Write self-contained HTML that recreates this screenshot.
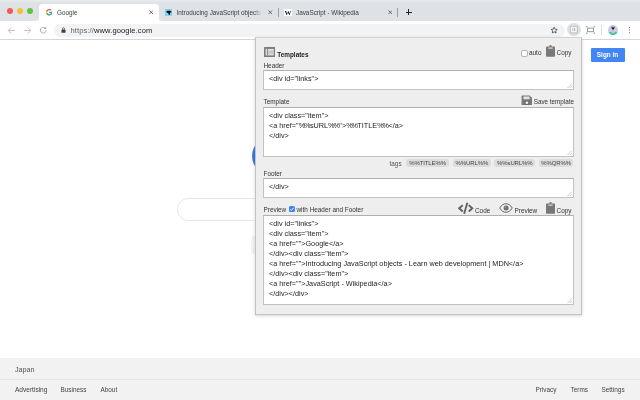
<!DOCTYPE html>
<html>
<head>
<meta charset="utf-8">
<title>Google</title>
<style>
*{box-sizing:border-box;margin:0;padding:0}
html,body{width:640px;height:400px;overflow:hidden;background:#fff;font-family:"Liberation Sans",sans-serif;color:#222}
.abs{position:absolute}
#tabbar{left:0;top:0;width:640px;height:21px;background:#dee1e6}
.tl{position:absolute;border-radius:50%;width:6px;height:6px;top:7.5px}
.tabtxt{position:absolute;font-size:6.35px;color:#3c4043;top:8.6px;white-space:nowrap}
.tabx{position:absolute;top:10.2px;width:4.5px;height:4.5px}
#toolbar{left:0;top:21px;width:640px;height:19px;background:#fff;border-bottom:1px solid #d6d6d6}
#omni{left:54px;top:23.5px;width:511px;height:13.5px;border-radius:6.75px;background:#f1f3f4}
#url{left:70.5px;top:26px;font-size:7.55px;color:#202124;white-space:nowrap;letter-spacing:0.1px}
#url span{color:#5f6368}
#popup{left:255px;top:37px;width:327px;height:277.5px;background:#eeeeee;border:1px solid #c2c2c2;border-top-color:#d4d4d4;box-shadow:0 1px 3px rgba(0,0,0,.16)}
.lbl{position:absolute;font-size:6.4px;color:#333;white-space:nowrap}
.ta{position:absolute;left:263px;width:311px;background:#fff;border:1px solid #c2c2c2;border-top-color:#b0b0b0;font-size:7.28px;color:#1c1c1c;padding:3px 5px;line-height:10px;white-space:nowrap;overflow:hidden}
.tag{position:absolute;top:159.3px;height:7.9px;background:#dcdcdc;border-radius:3px;font-size:6px;letter-spacing:-0.1px;color:#444;line-height:8.3px;text-align:center}
.pc{letter-spacing:-1.1px;margin-right:0.5px}
.grip{position:absolute;width:5px;height:5px;right:1px;bottom:1px}
#footer{left:0;top:358px;width:640px;height:42px;background:#f2f2f2}
#footer .ln{position:absolute;left:0;top:20.5px;width:640px;height:1px;background:#e6e6e6}
.ft{position:absolute;font-size:6.4px;color:#444;white-space:nowrap}
</style>
</head>
<body>
<div id="root" style="position:absolute;left:0;top:0;width:640px;height:400px;will-change:transform">
<!-- browser chrome -->
<div id="tabbar" class="abs"></div>
<div class="abs" style="left:0;top:0;width:640px;height:3px;background:linear-gradient(180deg,#e9ebee 0%,#e4e6ea 50%,#dee1e6 100%)"></div>
<svg class="abs" style="left:0;top:0" width="200" height="22" viewBox="0 0 200 22"><path fill="#fff" d="M36 21Q39 21 39 18V7.5Q39 4 42.5 4H155.5Q159 4 159 7.5V18Q159 21 162 21V22H36Z"/></svg>
<div class="tl" style="left:6.5px;background:#ee5c54"></div>
<div class="tl" style="left:16.5px;background:#f6bd3b"></div>
<div class="tl" style="left:26.5px;background:#5fc43c"></div>

<svg class="abs" style="left:45.8px;top:9px" width="6.5" height="6.5" viewBox="0 0 48 48">
<path fill="#EA4335" d="M24 9.5c3.54 0 6.71 1.22 9.21 3.6l6.85-6.85C35.9 2.38 30.47 0 24 0 14.62 0 6.51 5.38 2.56 13.22l7.98 6.19C12.43 13.72 17.74 9.5 24 9.5z"/>
<path fill="#4285F4" d="M46.98 24.55c0-1.57-.15-3.09-.38-4.55H24v9.02h12.94c-.58 2.96-2.26 5.48-4.78 7.18l7.73 6c4.51-4.18 7.09-10.36 7.09-17.65z"/>
<path fill="#FBBC05" d="M10.53 28.59c-.48-1.45-.76-2.99-.76-4.59s.27-3.14.76-4.59l-7.98-6.19C.92 16.46 0 20.12 0 24c0 3.88.92 7.54 2.56 10.78l7.97-6.19z"/>
<path fill="#34A853" d="M24 48c6.48 0 11.93-2.130 15.89-5.81l-7.730-6c-2.150 1.450-4.920 2.3-8.160 2.3-6.260 0-11.570-4.220-13.470-9.910l-7.980 6.190C6.510 42.620 14.620 48 24 48z"/>
</svg>
<div class="tabtxt" style="left:57px">Google</div>
<svg class="tabx" style="left:148.8px" viewBox="0 0 10 10"><path d="M1 1l8 8M9 1l-8 8" stroke="#45494d" stroke-width="1.7" fill="none"/></svg>

<div class="abs" style="left:164.6px;top:8.8px;width:7.8px;height:7.2px;background:#83d0f2"></div>
<svg class="abs" style="left:164.6px;top:8.8px" width="7.8" height="7.2" viewBox="0 0 16 14.4"><path fill="#0a0a0a" d="M2.5 5.5Q3 3.5 6 3.2L10.5 3.5Q13 4 13.5 6.5L10.8 7.2Q10.5 8.5 9.8 11.5L7.5 11.8Q7.2 9.5 6.5 8.2Q4 8 2.5 5.5Z"/></svg>
<div class="tabtxt" style="left:176.5px">Introducing JavaScript objects</div>
<div class="abs" style="left:254px;top:6px;width:9px;height:12px;background:linear-gradient(90deg,rgba(222,225,230,0),#dee1e6 85%)"></div>
<svg class="tabx" style="left:268px" viewBox="0 0 10 10"><path d="M1 1l8 8M9 1l-8 8" stroke="#45494d" stroke-width="1.7" fill="none"/></svg>
<div class="abs" style="left:278px;top:8px;width:1px;height:9px;background:#9aa0a6"></div>

<div class="abs" style="left:284.3px;top:8.8px;width:7.4px;height:7px;background:#fff;font-family:'Liberation Serif',serif;font-size:6.9px;font-weight:bold;line-height:7px;text-align:center;color:#111;overflow:hidden">W</div>
<div class="tabtxt" style="left:296px">JavaScript - Wikipedia</div>
<svg class="tabx" style="left:387.5px" viewBox="0 0 10 10"><path d="M1 1l8 8M9 1l-8 8" stroke="#45494d" stroke-width="1.7" fill="none"/></svg>
<div class="abs" style="left:397px;top:8px;width:1px;height:9px;background:#9aa0a6"></div>
<div class="abs" style="left:405.7px;top:11.8px;width:6.4px;height:1px;background:#202124"></div>
<div class="abs" style="left:408.4px;top:9.1px;width:1px;height:6.4px;background:#202124"></div>

<div id="toolbar" class="abs"></div>
<div id="omni" class="abs"></div>
<!-- nav icons -->
<svg class="abs" style="left:7px;top:25.5px" width="9" height="9" viewBox="0 0 18 18" fill="none" stroke="#b4b8bd" stroke-width="1.7"><path d="M15.5 9H2.5M8.8 2.7L2.5 9l6.3 6.3"/></svg>
<svg class="abs" style="left:22.7px;top:25.5px" width="9" height="9" viewBox="0 0 18 18" fill="none" stroke="#b4b8bd" stroke-width="1.7"><path d="M2.5 9h13M9.2 2.7L15.5 9l-6.3 6.3"/></svg>
<svg class="abs" style="left:38.8px;top:26px" width="8.4" height="8.4" viewBox="0 0 16 16" fill="none" stroke="#9ca1a7" stroke-width="1.6"><path d="M13.5 8a5.5 5.5 0 1 1-1.6-3.9"/><path d="M13.8 1.2v4.6h-4.6" fill="#9ca1a7" stroke="none"/></svg>
<svg class="abs" style="left:60.5px;top:27px" width="5" height="6" viewBox="0 0 10 12"><rect x="1" y="5" width="8" height="6.5" rx="1" fill="#3c4043"/><path d="M3 5V3.5a2 2 0 0 1 4 0V5" fill="none" stroke="#3c4043" stroke-width="1.4"/></svg>
<div id="url" class="abs"><span>https://</span>www.google.com</div>

<!-- right toolbar icons -->
<svg class="abs" style="left:550.4px;top:26px" width="8.4" height="8.4" viewBox="0 0 24 24" fill="none" stroke="#3c4043" stroke-width="2.2" stroke-linejoin="round"><path d="M12 3.5l2.6 5.6 6.1.7-4.5 4.1 1.2 6-5.4-3-5.4 3 1.2-6L3.3 9.8l6.1-.7z"/></svg>
<div class="abs" style="left:567.3px;top:22.9px;width:13.6px;height:13.6px;border-radius:50%;background:#dddfe2"></div>
<svg class="abs" style="left:570.4px;top:26.4px" width="7.6" height="7.2" viewBox="0 0 7.6 7.2"><rect x="0.3" y="0.3" width="7" height="6.6" rx="0.8" fill="#f7f7f7" stroke="#9a9a9a" stroke-width="0.6"/><text x="3.8" y="5.1" font-family="Liberation Sans, sans-serif" font-size="4.2" fill="#777" text-anchor="middle">G</text></svg>
<svg class="abs" style="left:586px;top:25.8px" width="9" height="7.8" viewBox="0 0 18 15.6" fill="none"><rect x="3.2" y="4.2" width="11.6" height="7.2" stroke="#8a8d91" stroke-width="1.8"/><path d="M0.7 3V0.7h2.6M14.7 0.7h2.6V3M17.3 12.6v2.3h-2.6M3.3 14.9H0.7v-2.3" stroke="#46b256" stroke-width="1.4"/></svg>
<div class="abs" style="left:601px;top:25px;width:1px;height:10px;background:#dadce0"></div>
<svg class="abs" style="left:608px;top:24.8px" width="10" height="10.2" viewBox="0 0 20 20.4"><defs><clipPath id="avc"><circle cx="10" cy="10.2" r="10"/></clipPath></defs><g clip-path="url(#avc)"><rect width="20" height="20.4" fill="#c6cbeb"/><path d="M-1 15Q10 12.5 21 15V21H-1Z" fill="#3fc4b0"/><path d="M8 9.5Q10 8 12 9.5L13.5 16.5H7Z" fill="#d8c4a4"/><path d="M6.5 3.5L8.5 3.5L10 6L11.5 3.5L13.5 3.5L11.8 8.5Q10 10 8.2 8.5Z" fill="#1f1a17"/></g></svg>
<div class="abs" style="left:628.6px;top:26.9px;width:1.5px;height:1.5px;border-radius:50%;background:#3c4043;box-shadow:0 2.6px 0 #3c4043,0 5.2px 0 #3c4043"></div>

<!-- page content -->
<div class="abs" style="left:591px;top:47.7px;width:34px;height:14.5px;background:#4285f4;border-radius:1px;color:#fff;font-size:6.4px;font-weight:bold;text-align:center;line-height:14.3px;padding-right:1px">Sign in</div>
<div class="abs" style="left:251.6px;top:137px;width:38px;height:38px;border-radius:50%;background:#3b78e7"></div>
<div class="abs" style="left:177px;top:198px;width:300px;height:22.5px;border:1px solid #e6e6e6;border-radius:11.25px;background:#fff"></div>
<div class="abs" style="left:250.5px;top:235.5px;width:40px;height:18px;background:#f2f2f2;border-radius:2px"></div>

<div id="footer" class="abs">
<div class="ln"></div>
<div class="ft" style="left:15px;top:6.8px;color:#555;font-size:7.2px">Japan</div>
<div class="ft" style="left:15px;top:28.2px;font-size:6.55px">Advertising</div>
<div class="ft" style="left:60.5px;top:28.2px">Business</div>
<div class="ft" style="left:100.5px;top:28.2px">About</div>
<div class="ft" style="left:535.5px;top:28.2px">Privacy</div>
<div class="ft" style="left:570.5px;top:28.2px">Terms</div>
<div class="ft" style="left:601.5px;top:28.2px">Settings</div>
</div>

<!-- popup -->
<div id="popup" class="abs"></div>
<svg class="abs" style="left:263.7px;top:46.7px" width="11.4" height="10.3" viewBox="0 0 22.8 20.6"><rect x="0" y="0" width="22.8" height="20.6" rx="1" fill="#7c7c7c"/><rect x="3.2" y="3.8" width="16.4" height="13" fill="#e0e0e0"/><rect x="8.6" y="8.2" width="11" height="4.2" fill="#cacaca"/><rect x="6.4" y="3.8" width="1.6" height="13" fill="#7c7c7c"/><rect x="3.2" y="7.6" width="16.4" height="0.8" fill="#a8a8a8"/><rect x="3.2" y="12.2" width="16.4" height="0.8" fill="#a8a8a8"/></svg>
<div class="lbl" style="left:277.3px;top:51.2px;font-weight:bold;font-size:6.4px;color:#222">Templates</div>
<div class="abs" style="left:521.4px;top:50.4px;width:6.5px;height:6.5px;background:#fff;border:0.8px solid #b4b4b4;border-radius:2px"></div>
<div class="lbl" style="left:529px;top:49.3px">auto</div>
<svg class="abs" style="left:545.7px;top:45px" width="9" height="12" viewBox="0 0 18 24"><path fill="#787878" d="M6.5 3.5V2.2a2.5 2.2 0 0 1 5 0V3.5z"/><rect x="0" y="3" width="18" height="20.6" rx="1.6" fill="#787878"/><rect x="4.6" y="5" width="8.8" height="2.4" rx="0.5" fill="#d6d6d6"/></svg>
<div class="lbl" style="left:556.6px;top:49.4px">Copy</div>

<div class="lbl" style="left:263.5px;top:62px">Header</div>
<div class="ta" style="top:70px;height:20px"><div>&lt;div id="links"&gt;</div><svg class="grip" viewBox="0 0 5 5"><path d="M0.5 5L5 0.5M3 5L5 3" stroke="#aaa" stroke-width=".6"/></svg></div>

<div class="lbl" style="left:263.5px;top:98.4px">Template</div>
<svg class="abs" style="left:520.5px;top:94.5px" width="11.8" height="10.8" viewBox="0 0 22 20" preserveAspectRatio="none"><path fill="#7a7a7a" d="M2.5 1h13.5l5 4.5v12.5a1.5 1.5 0 0 1-1.5 1.5H2.5a1.5 1.5 0 0 1-1.5-1.5V2.5a1.5 1.5 0 0 1 1.5-1.5z"/><rect x="4.5" y="3" width="11.5" height="5" rx="0.5" fill="#e4e4e4"/><rect x="6.5" y="10.8" width="9" height="8.7" fill="#6c6c6c"/><circle cx="11" cy="14.4" r="2.5" fill="#f0f0f0"/></svg>
<div class="lbl" style="left:533.7px;top:98.4px;font-size:6.3px">Save template</div>
<div class="ta" style="top:107px;height:50px"><div>&lt;div class="item"&gt;</div><div>&lt;a href="<span class="pc">%%</span>sURL<span class="pc">%%</span>"&gt;<span class="pc">%%</span>TITLE<span class="pc">%%</span>&lt;/a&gt;</div><div>&lt;/div&gt;</div><svg class="grip" viewBox="0 0 5 5"><path d="M0.5 5L5 0.5M3 5L5 3" stroke="#aaa" stroke-width=".6"/></svg></div>

<div class="lbl" style="left:389.5px;top:159.5px;color:#555">tags</div>
<div class="tag" style="left:406.2px;width:42.8px">%%TITLE%%</div>
<div class="tag" style="left:452.8px;width:38px">%%URL%%</div>
<div class="tag" style="left:494.4px;width:40.8px">%%sURL%%</div>
<div class="tag" style="left:538.7px;width:34.7px">%%QR%%</div>

<div class="lbl" style="left:263.5px;top:170px">Footer</div>
<div class="ta" style="top:178px;height:20px"><div>&lt;/div&gt;</div><svg class="grip" viewBox="0 0 5 5"><path d="M0.5 5L5 0.5M3 5L5 3" stroke="#aaa" stroke-width=".6"/></svg></div>

<div class="lbl" style="left:263.5px;top:206px">Preview</div>
<div class="abs" style="left:289.3px;top:206.3px;width:6px;height:6px;background:#3b82f6;border-radius:1.5px"></div>
<svg class="abs" style="left:289.3px;top:206.3px" width="6" height="6" viewBox="0 0 12 12"><path d="M2.5 6.2l2.5 2.5 4.5-5.2" fill="none" stroke="#fff" stroke-width="1.8"/></svg>
<div class="lbl" style="left:296.5px;top:206px">with Header and Footer</div>

<svg class="abs" style="left:458px;top:201.5px" width="15.5" height="12.5" viewBox="0 0 31 25" fill="none" stroke="#606060" stroke-width="3.9"><path d="M9.5 6.3L2.5 12.6l7 6.3M21.5 6.3l7 6.3-7 6.3" stroke-linejoin="miter"/><path d="M12.3 23.5L18.7 1.5" stroke-width="3.7"/></svg>
<div class="lbl" style="left:475px;top:206.8px">Code</div>
<svg class="abs" style="left:499px;top:203px" width="14" height="10" viewBox="0 0 28 20" fill="none" stroke="#666" stroke-width="2"><path d="M1.5 10C5 4 9 1.5 14 1.5S23 4 26.5 10C23 16 19 18.5 14 18.5S5 16 1.5 10z"/><circle cx="14.2" cy="10" r="5" fill="#707070" stroke="none"/><circle cx="12.6" cy="8.4" r="1.5" fill="#999" stroke="none"/></svg>
<div class="lbl" style="left:514.5px;top:206.8px">Preview</div>
<svg class="abs" style="left:545.7px;top:202px" width="9" height="12" viewBox="0 0 18 24"><path fill="#787878" d="M6.5 3.5V2.2a2.5 2.2 0 0 1 5 0V3.5z"/><rect x="0" y="3" width="18" height="20.6" rx="1.6" fill="#787878"/><rect x="4.6" y="5" width="8.8" height="2.4" rx="0.5" fill="#d6d6d6"/></svg>
<div class="lbl" style="left:556.6px;top:206.8px">Copy</div>

<div class="ta" style="top:215px;height:90px"><div>&lt;div id="links"&gt;</div><div>&lt;div class="item"&gt;</div><div>&lt;a href=""&gt;Google&lt;/a&gt;</div><div>&lt;/div&gt;&lt;div class="item"&gt;</div><div>&lt;a href=""&gt;Introducing JavaScript objects - Learn web development | MDN&lt;/a&gt;</div><div>&lt;/div&gt;&lt;div class="item"&gt;</div><div>&lt;a href=""&gt;JavaScript - Wikipedia&lt;/a&gt;</div><div>&lt;/div&gt;&lt;/div&gt;</div><svg class="grip" viewBox="0 0 5 5"><path d="M0.5 5L5 0.5M3 5L5 3" stroke="#aaa" stroke-width=".6"/></svg></div>

</div>
</body>
</html>
